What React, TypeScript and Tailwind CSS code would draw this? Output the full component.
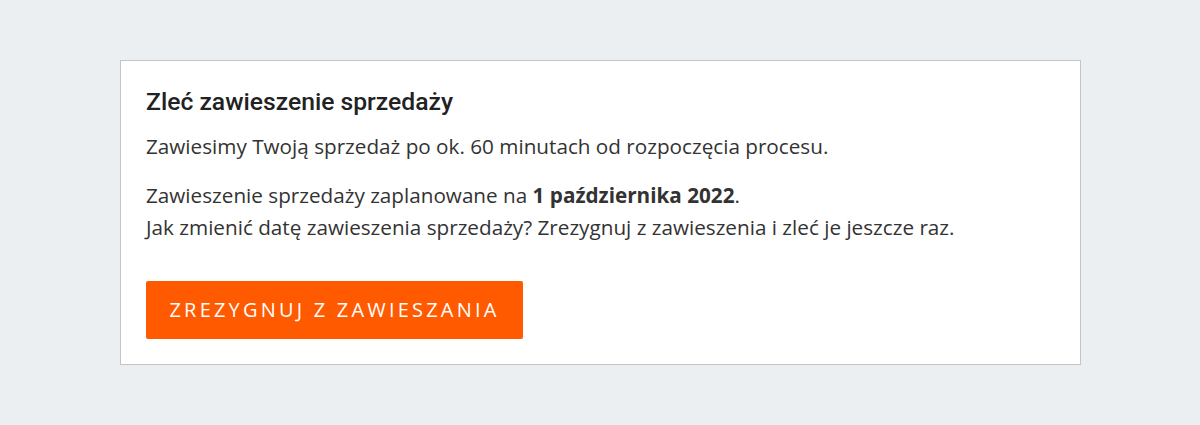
export default function App() {
  return (
    <div className="min-h-[425px] bg-[#eceff2] pt-[60px] pl-[120px]">
      <div className="w-[961px] h-[305px] border border-[#c4c4c4] bg-white px-[25px] pt-[26px]">
        <h2 className="font-['Roboto',sans-serif] font-medium text-[24.7px] leading-[30px] text-[#222]">
          Zleć zawieszenie sprzedaży
        </h2>
        <div className="font-['Open_Sans',sans-serif] text-[20.7px] leading-[32px] text-[#333]">
          <p className="mt-[13px]">Zawiesimy Twoją sprzedaż po ok. 60 minutach od rozpoczęcia procesu.</p>
          <p className="mt-[17px]">
            Zawieszenie sprzedaży zaplanowane na <b className="font-bold">1 października 2022</b>.
            <br />
            Jak zmienić datę zawieszenia sprzedaży? Zrezygnuj z zawieszenia i zleć je jeszcze raz.
          </p>
        </div>
        <button className="mt-[38px] h-[58px] w-[377px] rounded-[2px] bg-[#ff5a00] font-['Open_Sans',sans-serif] text-[20px] tracking-[0.16em] text-white">
          ZREZYGNUJ Z ZAWIESZANIA
        </button>
      </div>
    </div>
  );
}
